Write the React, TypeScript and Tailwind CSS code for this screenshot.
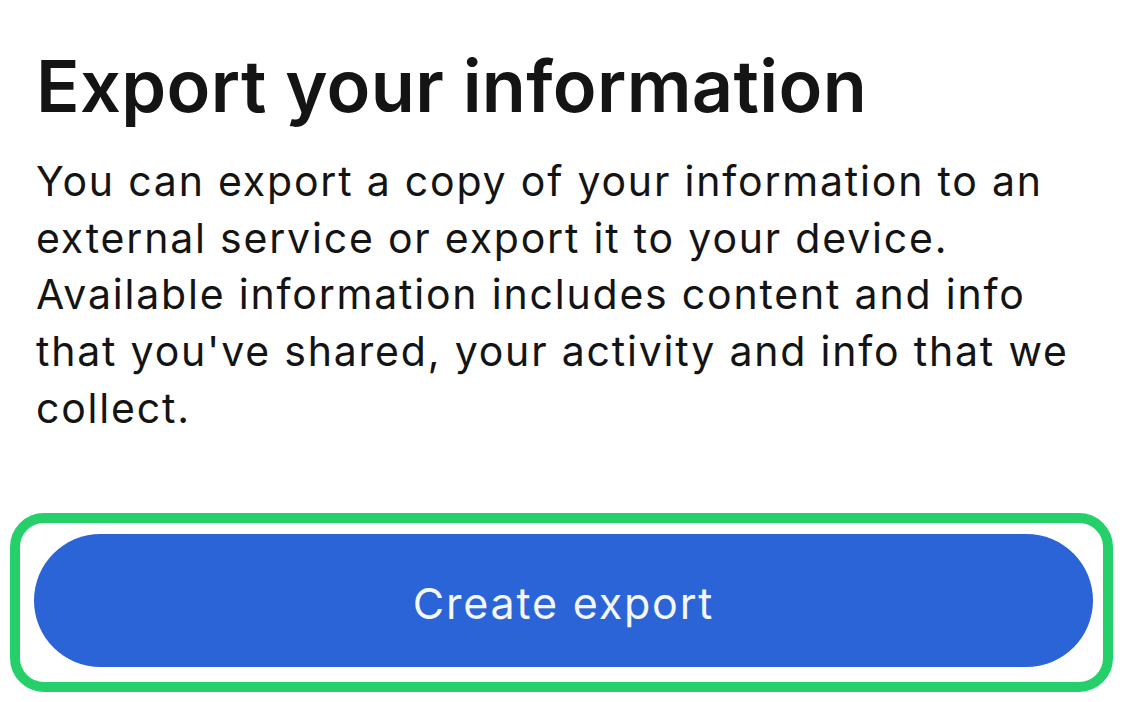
import React from 'react';

export default function App() {
  return (
    <div className="w-[1131px] h-[702px] bg-white overflow-hidden font-['Inter',sans-serif] text-[#141414]">
      <div className="pl-[36px] pt-[38px]">
        <h1 className="text-[72px] leading-[96px] font-semibold tracking-[0.35px]">Export your information</h1>
        <p className="mt-[19px] text-[41px] leading-[56.7px] font-normal tracking-[1.8px] whitespace-nowrap">
          You can export a copy of your information to an
          <br />
          external service or export it to your device.
          <br />
          Available information includes content and info
          <br />
          that you've shared, your activity and info that we
          <br />
          collect.
        </p>
      </div>
      <div className="mt-[76px] ml-[10px] w-[1103px] h-[179px] border-[10px] border-[#25d06b] rounded-[34px] pl-[14px] pr-[10px] pt-[11px] pb-[15px]">
        <button className="w-full h-[133px] pt-[6px] rounded-full bg-[#2a64d6] text-[#f5f6f8] text-[43px] font-normal tracking-[1.8px]">
          Create export
        </button>
      </div>
    </div>
  );
}
